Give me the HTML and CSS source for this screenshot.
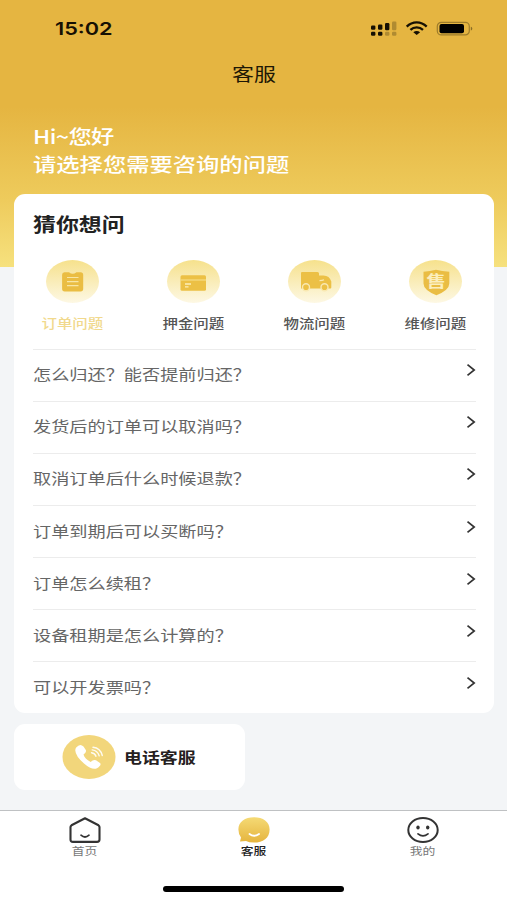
FILE: index.html
```html
<!DOCTYPE html>
<html lang="zh-CN">
<head>
<meta charset="utf-8">
<title>客服</title>
<link rel="stylesheet" href="styles.css">
</head>
<body>
<div class="screen">
  <header class="status">
    <span class="time wide">15:02</span>
    <svg class="status-icons" viewBox="0 0 104 18">
      <g fill="#161003">
        <rect x="1" y="5.500" width="4.400" height="4.300" rx="1.200"/><rect x="8" y="4.500" width="4.400" height="5.300" rx="1.200"/><rect x="15" y="3" width="4.400" height="7.200" rx="1.200"/>
        <rect x="1" y="11.700" width="4.400" height="4.100" rx="1.200"/><rect x="8" y="11.700" width="4.400" height="4.100" rx="1.200"/>
      </g>
      <g fill="#161003" opacity=".25"><rect x="22" y="1.500" width="4.400" height="8.700" rx="1.200"/><rect x="15" y="11.700" width="4.400" height="4.100" rx="1.200"/><rect x="22" y="11.700" width="4.400" height="4.100" rx="1.200"/></g>
      <g fill="none" stroke="#161003" stroke-width="2.300"><path d="M36.700 6.600C42.500 1 50.900 1 56.700 6.600"/><path d="M40.400 9.900C44 6.500 49.400 6.500 53 9.900"/></g>
      <path fill="#161003" d="M43.300 12.200C45.400 10.500 48 10.500 50.100 12.200L46.700 15.100Z"/>
      <rect x="67.300" y="2.300" width="32" height="12.600" rx="4" fill="none" stroke="#6e561d" stroke-opacity=".6" stroke-width="1.200"/>
      <rect x="69.500" y="4.100" width="24.500" height="9.200" rx="2" fill="#000"/>
      <path d="M100.800 6.700C102.800 7.100 102.800 10.100 100.800 10.500Z" fill="#8b6d25"/>
    </svg>
  </header>
  <h1 class="title"><span class="wide">客服</span></h1>
  <div class="greeting">
    <p><span class="wide">Hi~您好</span></p>
    <p><span class="wide">请选择您需要咨询的问题</span></p>
  </div>

  <main>
    <section class="card">
      <h2><span class="wide">猜你想问</span></h2>
      <div class="tabs">
        <div class="tab active">
          <span class="disc"><svg viewBox="0 0 53 43"><path fill="#eabd43" d="M18.500 12.300h4.500q3.700 3 7.400 0H34.600q2.600 0 2.600 2.500V28.800q0 2.600-2.600 2.600H18.700q-2.600 0-2.600-2.600V14.800q0-2.500 2.400-2.500Z"/><path d="M21 17.500h11.500M21 21.600h11.500M21 25.700h11.500" stroke="#f8e6a5" stroke-width="1.200"/></svg></span>
          <span class="wide">订单问题</span>
        </div>
        <div class="tab">
          <span class="disc"><svg viewBox="0 0 53 43"><rect x="13.500" y="15.200" width="25.500" height="15.500" rx="1.500" fill="#ecc045"/><path d="M13.500 20h25.500" stroke="#f7dd86" stroke-width="1.200"/><path d="M18 24h6M18 26.900h3.500" stroke="#fbeeb9" stroke-width="1.300"/></svg></span>
          <span class="wide">押金问题</span>
        </div>
        <div class="tab">
          <span class="disc"><svg viewBox="0 0 53 43"><path fill="#ecc045" d="M14 12h15.500q1.500 0 1.500 1.500v2h4.500q6 0 7.800 6v6q0 1-1 1H13V13q0-1 1-1Z"/><circle cx="18" cy="27.300" r="3.500" fill="#ecc045" stroke="#f9e8b1" stroke-width="1.400"/><circle cx="36.500" cy="27.300" r="3.500" fill="#ecc045" stroke="#f9e8b1" stroke-width="1.400"/><path d="M31.500 20.700q3-.2 4.500-1" fill="none" stroke="#f9e8b1" stroke-width="1.200"/></svg></span>
          <span class="wide">物流问题</span>
        </div>
        <div class="tab">
          <span class="disc"><svg viewBox="0 0 53 43"><path fill="#eabd43" d="M14.500 11.700Q21 11.300 27 9.700Q33 11.300 40.300 11.700V23.500Q40.300 30 27.400 35.300Q14.500 30 14.500 23.500Z"/></svg><b class="wide">售</b></span>
          <span class="wide">维修问题</span>
        </div>
      </div>
      <ul class="questions">
        <li><span class="wide">怎么归还？能否提前归还？</span><svg viewBox="0 0 10 14"><path d="M1.500 1.600L8.200 7L1.500 12.400"/></svg></li>
        <li><span class="wide">发货后的订单可以取消吗？</span><svg viewBox="0 0 10 14"><path d="M1.500 1.600L8.200 7L1.500 12.400"/></svg></li>
        <li><span class="wide">取消订单后什么时候退款？</span><svg viewBox="0 0 10 14"><path d="M1.500 1.600L8.200 7L1.500 12.400"/></svg></li>
        <li><span class="wide">订单到期后可以买断吗？</span><svg viewBox="0 0 10 14"><path d="M1.500 1.600L8.200 7L1.500 12.400"/></svg></li>
        <li><span class="wide">订单怎么续租？</span><svg viewBox="0 0 10 14"><path d="M1.500 1.600L8.200 7L1.500 12.400"/></svg></li>
        <li><span class="wide">设备租期是怎么计算的？</span><svg viewBox="0 0 10 14"><path d="M1.500 1.600L8.200 7L1.500 12.400"/></svg></li>
        <li><span class="wide">可以开发票吗？</span><svg viewBox="0 0 10 14"><path d="M1.500 1.600L8.200 7L1.500 12.400"/></svg></li>
      </ul>
    </section>
    <section class="phone">
      <svg viewBox="0 0 54 44"><ellipse cx="27" cy="22" rx="26.500" ry="21.900" fill="#f2d67b"/><path fill="#fff" d="M14.200 12.500Q18 8 21.500 11.500L23.800 15Q24.800 17 21.500 19.500Q22.500 23.500 28.700 27Q31.500 24 34 25.300L38 28Q40 30 35 33.300Q30 35.500 22 28.500Q13.500 21 13.300 15.500Q13.200 13.700 14.200 12.500Z"/><g fill="none" stroke="#fff" stroke-width="1.400" stroke-linecap="round" stroke-opacity=".9"><path d="M29.500 17.700Q33 18.200 34 21.200"/><path d="M30.200 14.900Q35.600 15.500 37.200 20.900"/><path d="M31 12.200Q38.500 13 40.300 20.500"/></g></svg>
      <span class="wide">电话客服</span>
    </section>
  </main>

  <nav>
    <div class="item"><svg viewBox="0 0 34 28"><path d="M17 2.200L30.500 9.300Q31.500 10 31.500 11V23.500Q31.500 25.900 29 25.900H5Q2.500 25.900 2.500 23.500V11Q2.500 10 3.500 9.300Z" fill="none" stroke="#333" stroke-width="2.100" stroke-linejoin="round"/><path d="M13 19.200Q17 22.800 21 19.200" fill="none" stroke="#333" stroke-width="1.700" stroke-linecap="round"/></svg><span class="wide">首页</span></div>
    <div class="item on"><svg viewBox="0 0 34 28"><defs><linearGradient id="bubble" x1="0" y1="0" x2="0" y2="1"><stop stop-color="#f5da75"/><stop offset="1" stop-color="#e5b43e"/></linearGradient></defs><path fill="url(#bubble)" d="M17 1.200C26 1.200 32.600 5.500 32.600 13.500C32.600 22 26 26.600 17 26.600Q12 26.600 9 25L3 25.600L4 21.500Q1.400 18 1.400 13.500C1.400 5.500 8 1.200 17 1.200Z"/><path d="M12.500 18Q17 21.500 22 18" fill="none" stroke="#fff" stroke-width="1.900" stroke-linecap="round"/></svg><span class="wide">客服</span></div>
    <div class="item"><svg viewBox="0 0 34 28"><ellipse cx="17" cy="14" rx="14.700" ry="12.100" fill="none" stroke="#333" stroke-width="2"/><ellipse cx="12" cy="11.500" rx="1.700" ry="2.100" fill="#333"/><ellipse cx="21.700" cy="11.500" rx="1.700" ry="2.100" fill="#333"/><path d="M12 17.800Q17 21.900 22 17.800" fill="none" stroke="#333" stroke-width="1.700" stroke-linecap="round"/></svg><span class="wide">我的</span></div>
    <i class="home-bar"></i>
  </nav>
</div>
</body>
</html>
```
FILE: styles.css
```css
* { box-sizing: border-box; }
body, h1, h2, p, ul { margin: 0; padding: 0; }
body { font-family: "Noto Sans CJK SC", sans-serif; color: #222; }
svg { display: block; flex: none; }

.screen {
  width: 507px;
  height: 900px;
  overflow: hidden;
  display: flex;
  flex-direction: column;
  background: linear-gradient(#e5b541 0, #e5b541 40%, #eecb5c 75%, #f6e17e 100%) 0 0 / 100% 267px no-repeat #f3f5f7;
}

/* Text is set 1.22 times wider than its natural width. */
.wide { display: inline-block; white-space: nowrap; transform: scaleX(1.22); transform-origin: left center; }

.status { height: 56px; padding: 2px 33px 0 55px; display: flex; justify-content: space-between; align-items: center; }
.time { font: 600 17.800px/20px Inter, sans-serif; color: #161003; }
.status-icons { width: 104px; height: 18px; }
.title { height: 36px; text-align: center; font-size: 18px; line-height: 34px; font-weight: 400; color: #1d1705; }
.title .wide, .tab .wide, .item .wide { transform-origin: center; }
.greeting { padding: 30px 33px 0 32.500px; height: 102px; color: #fff; font-size: 19.100px; line-height: 28px; font-weight: 500; }
.greeting p:first-child { letter-spacing: -.5px; }

main { flex: 1; padding: 0 13px 0 14px; }
.card { height: 519px; padding: 15px 18px 0 19px; border-radius: 11px; background: #fff; }
h2 { font-size: 18.800px; line-height: 29px; font-weight: 700; }
.tabs { height: 110.500px; display: flex; justify-content: space-between; padding: 20px 0 0; }
.tab { width: 78px; display: flex; flex-direction: column; align-items: center; font-size: 12.700px; line-height: 20px; font-weight: 500; color: #555; }
.tab:last-child { margin-right: 2px; }
.tab.active { color: #f1d98d; }
.disc { display: grid; place-items: center; width: 53px; height: 43px; margin: 2px 0 10px; border-radius: 50%; background: linear-gradient(#f6e18c, #fdf8e4); }
.disc > * { grid-area: 1 / 1; }
.disc svg { width: 53px; height: 43px; }
.disc b { font-size: 16px; line-height: 17px; font-weight: 700; color: #fbeebd; margin: 0 0 3px 2px; }

.questions { list-style: none; }
.questions li { height: 52.170px; display: flex; justify-content: space-between; align-items: center; border-top: 1px solid #ececec; font-size: 14.900px; line-height: 24px; color: #666; }
.questions .wide { margin: -2px 0 0 -.5px; }
.questions svg { width: 10px; height: 14px; margin-bottom: 10px; fill: none; stroke: #333; stroke-width: 1.700; }

.phone { width: 231px; height: 66px; margin-top: 11px; padding-left: 48px; display: flex; align-items: center; gap: 8px; border-radius: 11px; background: #fff; font-size: 14.700px; font-weight: 700; color: #252020; }
.phone svg { width: 54px; height: 44px; }
.phone .wide { margin-top: -2px; }

nav { height: 90px; border-top: 1px solid #bfc1c3; background: #fff; display: grid; grid-template-columns: repeat(3, 1fr); grid-template-rows: 75px 6px; }
.item { display: flex; flex-direction: column; align-items: center; padding-top: 5px; font-size: 10.500px; line-height: 14px; color: #777; }
.item svg { width: 34px; height: 28px; }
.item.on { color: #222; font-weight: 500; }
.home-bar { grid-column: 1 / -1; justify-self: center; width: 181px; height: 6px; border-radius: 3px; background: #000; }
```
